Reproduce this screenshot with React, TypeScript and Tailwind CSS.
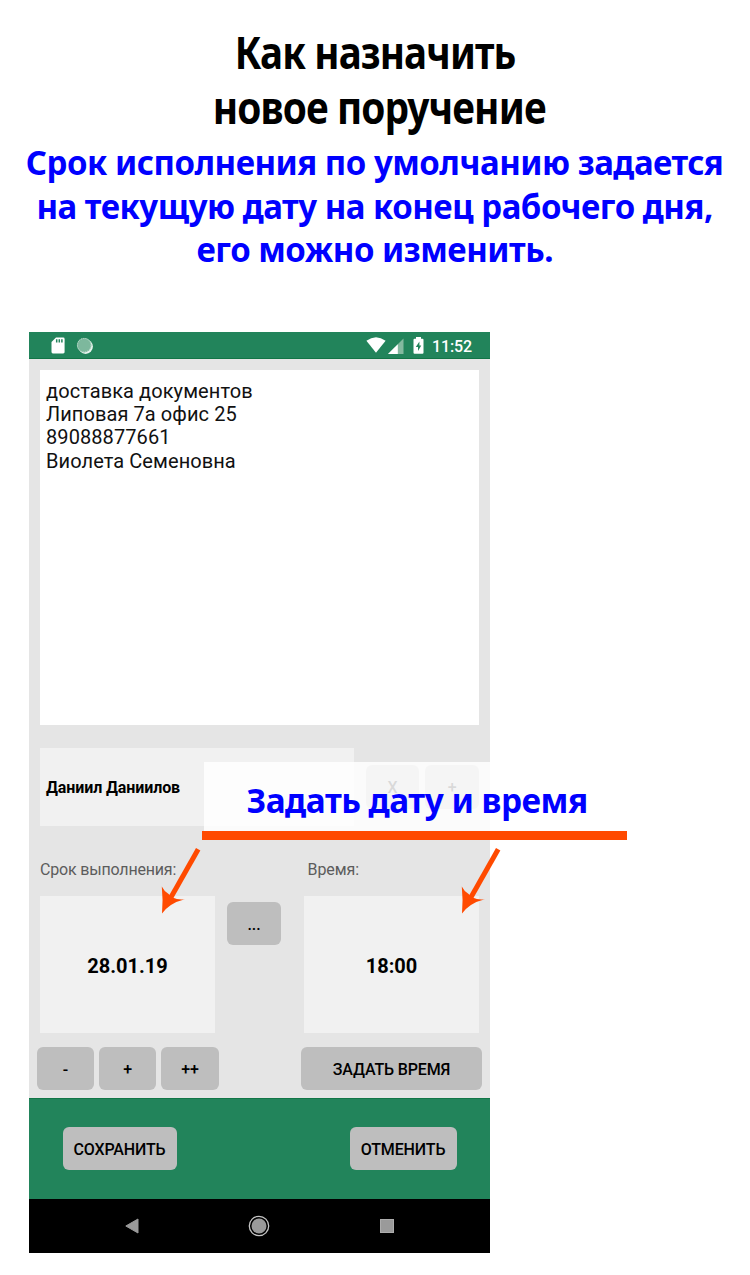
import type { ReactNode } from "react";

function Key({ children, className = "" }: { children: ReactNode; className?: string }) {
  return (
    <button
      type="button"
      className={`flex shrink-0 items-center justify-center rounded-[6px] bg-[#bebebe] pt-[2px] text-[16px] leading-none font-medium tracking-[-0.15px] text-black ${className}`}
    >
      {children}
    </button>
  );
}

function StatusBar() {
  return (
    <header className="flex h-[27px] items-center border-b border-[#127546] bg-[#22845b] pl-[22px] pr-[18px] text-white">
      <svg width="15" height="18" viewBox="0 0 15 18" className="mt-px">
        <path
          d="M5 .5H12.200Q13.600 .5 13.600 1.900V15.100Q13.600 16.500 12.200 16.500H1.900Q.5 16.500 .5 15.100V5.100Z"
          fill="#fff"
        />
        <path d="M5.700 2.300V5.500M8.300 2.300V5.500M10.900 2.300V5.500" stroke="#22845b" strokeWidth="1.500" />
      </svg>
      <svg width="18" height="18" viewBox="0 0 18 18" className="mt-px ml-[10px]">
        <circle cx="9.600" cy="9.600" r="7.300" fill="#e8f3ee" />
        <circle cx="8.200" cy="8.200" r="7.200" fill="#7db89d" />
        <circle cx="8.200" cy="8.200" r="6.800" fill="none" stroke="#c4e0d3" strokeWidth="1" strokeDasharray="1.200 1" />
      </svg>
      <svg width="20" height="16" viewBox="0 0 20 16" className="ml-auto">
        <path d="M.4 3.800Q10-3.400 19.600 3.800L10 15.700Z" fill="#fff" />
      </svg>
      <svg width="16" height="16" viewBox="0 0 16 16" className="mt-px ml-[2px]">
        <path d="M0 16L15.500 .5V16Z" fill="#83b99f" />
        <path d="M0 16L9.800 6.200V16Z" fill="#fff" />
      </svg>
      <svg width="11" height="17" viewBox="0 0 11 17" className="ml-[9px]">
        <path d="M3 0H8V1.800H9.500Q10.500 1.800 10.500 2.800V15.700Q10.500 16.700 9.500 16.700H1.500Q.5 16.700 .5 15.700V2.800Q.5 1.800 1.500 1.800H3Z" fill="#fff" />
        <path d="M6.400 4.500L2.800 9.900H5V14L8.300 8.500H6.400Z" fill="#22845b" />
      </svg>
      <span className="ml-[8px] pt-[3px] text-[16px] leading-none font-medium tracking-[-0.1px]">11:52</span>
    </header>
  );
}

function Arrow() {
  return (
    <svg width="40" height="66" viewBox="0 0 40 66" className="block">
      <path d="M37.200 1.300L9 51" stroke="#ff4a00" strokeWidth="5" />
      <path d="M1 65.500Q2.200 52 .8 38.500Q3 43 7 45.500L11.500 49.500Q17 52 23.800 51.200Q8.500 55 1 65.500Z" fill="#ff4a00" />
    </svg>
  );
}

function Callout() {
  return (
    <div className="absolute top-[430px] left-[173px] w-[425px]">
      <div className="ml-[2px] flex h-[69px] justify-center bg-white/85 pt-[8px] pl-[3px] font-['Noto_Sans',sans-serif] text-[34px] leading-[60px] font-bold tracking-[-0.5px] whitespace-nowrap text-[#0000ff]">
        <span className="inline-block scale-x-[0.98]">Задать дату и время</span>
      </div>
      <div className="h-[9px] bg-[#ff4a00]" />
    </div>
  );
}

function Phone() {
  return (
    <main className="relative mt-[60px] ml-[29px] flex h-[921px] w-[461px] flex-col bg-[#e5e5e5] font-[Roboto,sans-serif] text-black">
      <StatusBar />
      <section className="flex h-[739px] flex-col">
        <div className="mx-[11px] mt-[11px] h-[355px] bg-white px-[6px] pt-[9.500px] text-[20px] leading-[23.400px] tracking-[0.08px] text-[#111]">
          <p>доставка документов</p>
          <p>Липовая 7а офис 25</p>
          <p>89088877661</p>
          <p>Виолета Семеновна</p>
        </div>

        <div className="mx-[11px] mt-[23px] flex h-[78px] items-center">
          <div className="flex h-full w-[314px] items-center bg-[#f1f1f1] pt-[2px] pl-[6px] text-[16px] font-bold tracking-[-0.1px]">
            Даниил Даниилов
          </div>
          <Key className="ml-[12px] h-[44px] w-[53px]">X</Key>
          <Key className="ml-[6px] h-[44px] w-[54px]">+</Key>
        </div>

        <div className="mt-[33px] flex h-[22px] items-center text-[16px] tracking-[-0.18px] text-[#5c5c5c]">
          <span className="ml-[11px] w-[267.500px]">Срок выполнения:</span>
          <span className="tracking-[-0.05px]">Время:</span>
        </div>

        <div className="mt-[15px] ml-[11px] flex h-[137px] text-[20px] font-bold">
          <div className="flex w-[175px] items-center justify-center bg-[#f1f1f1] pt-[2px]">28.01.19</div>
          <Key className="mt-[6px] ml-[12px] h-[43px] w-[54px]">...</Key>
          <div className="ml-[23px] flex w-[175px] items-center justify-center bg-[#f1f1f1] pt-[2px]">18:00</div>
        </div>

        <div className="mx-[8px] mt-[14px] flex h-[43px] gap-[5px]">
          <Key className="w-[57px]">-</Key>
          <Key className="w-[57px]">+</Key>
          <Key className="w-[58px]">++</Key>
          <Key className="ml-auto w-[181px]">ЗАДАТЬ ВРЕМЯ</Key>
        </div>
      </section>

      <footer className="flex h-[101px] items-start justify-between border-t border-[#127546] bg-[#22845b] px-[33.500px] pt-[28px]">
        <Key className="h-[43px] w-[114px]">СОХРАНИТЬ</Key>
        <Key className="h-[43px] w-[107px]">ОТМЕНИТЬ</Key>
      </footer>

      <nav className="flex h-[54px] items-center bg-black">
        <svg width="14" height="16" viewBox="0 0 14 16" className="ml-[96px]">
          <path d="M13 1V15L.8 8Z" fill="#9a9a9a" stroke="#9a9a9a" strokeLinejoin="round" />
        </svg>
        <svg width="22" height="22" viewBox="0 0 22 22" className="ml-[109px]">
          <circle cx="11" cy="11" r="9.700" fill="none" stroke="#c4c4c4" strokeWidth="1.300" />
          <circle cx="11" cy="11" r="7.500" fill="#9a9a9a" />
        </svg>
        <div className="ml-[110px] size-[14px] border border-[#adadad] bg-[#9a9a9a]" />
      </nav>

      <Callout />
      <div className="absolute top-[516px] left-[132px]">
        <Arrow />
      </div>
      <div className="absolute top-[516px] left-[432px]">
        <Arrow />
      </div>
    </main>
  );
}

export default function App() {
  return (
    <div className="h-[1275px] w-[750px] overflow-hidden bg-white">
      <div className="flex h-[272px] flex-col items-center pt-[24px] text-center font-['Noto_Sans',sans-serif] font-bold whitespace-nowrap">
        <h1 className="flex flex-col items-center text-[45px] leading-[55px] tracking-[-1px] text-black">
          <span className="scale-x-[0.856]">Как назначить</span>
          <span className="ml-[8px] scale-x-[0.862]">новое поручение</span>
        </h1>
        <p className="mt-[7px] flex flex-col items-center text-[34px] leading-[43.500px] tracking-[-0.5px] text-[#0000ff]">
          <span className="scale-x-[0.97]">Срок исполнения по умолчанию задается</span>
          <span className="scale-x-[0.97]">на текущую дату на конец рабочего дня,</span>
          <span className="scale-x-[0.97]">его можно изменить.</span>
        </p>
      </div>
      <Phone />
    </div>
  );
}
